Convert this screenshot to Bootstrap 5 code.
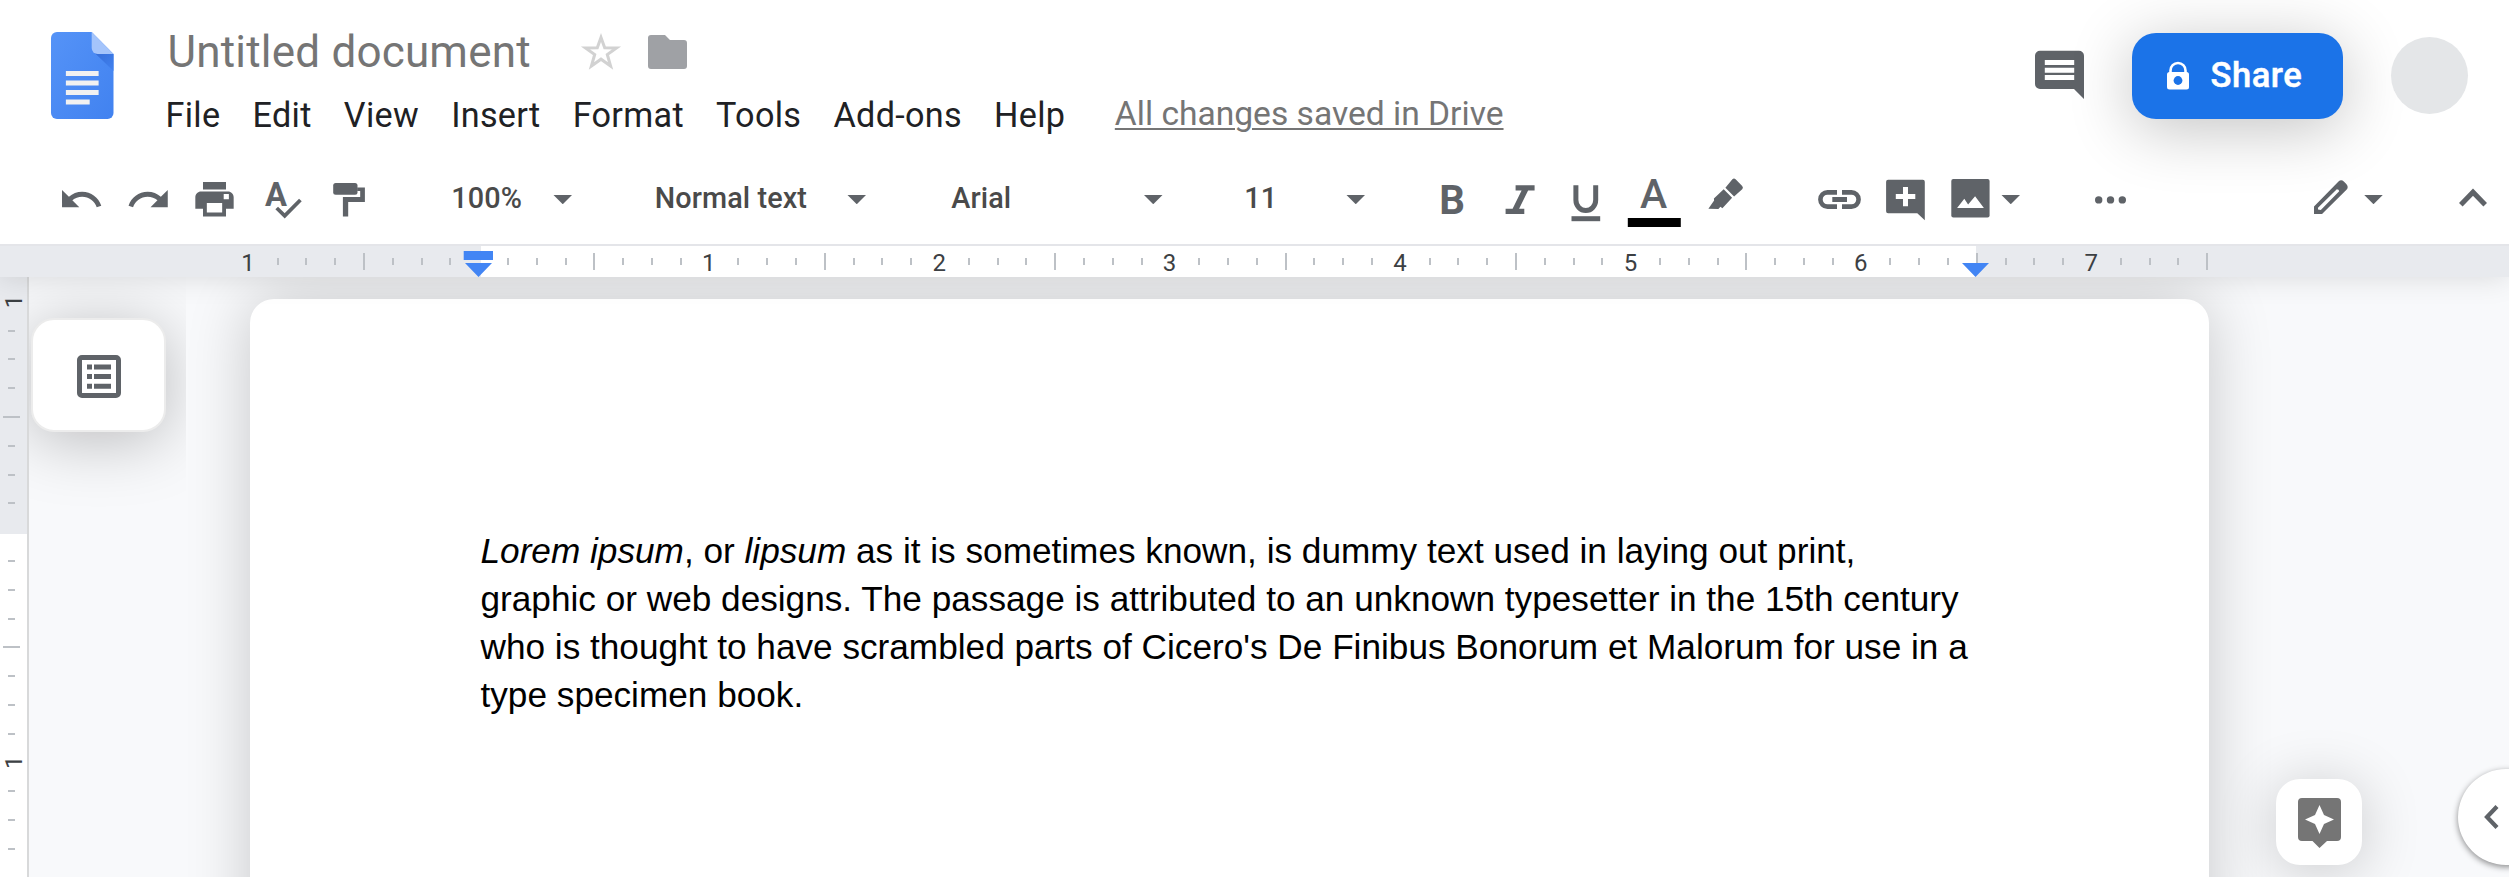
<!DOCTYPE html>
<html lang="en">
<head>
<meta charset="utf-8">
<title>Untitled document</title>
<link href="https://cdn.jsdelivr.net/npm/bootstrap@5.3.0/dist/css/bootstrap.min.css" rel="stylesheet">
<style>
  :root { --ink: #5f6368; }
  body { font-family: Roboto, "Liberation Sans", sans-serif; background: #f8f9fb; color: #202124; height: 877px; }
  svg { display: block; flex: none; overflow: visible; }
  .app-head { height: 277px; z-index: 5; box-shadow: 0 0 28px rgba(0,0,0,.13); }
  .head-row { height: 154px; padding-left: 51px; }
  .logo { margin-top: 32px; }
  .titles { margin-left: 53px; padding-top: 27.5px; }
  .doc-title { font-size: 44px; line-height: 48px; letter-spacing: .2px; color: #757575; }
  .title-line { height: 48px; padding-left: 1px; }
  .star { margin-left: 51.5px; margin-top: -1px; }
  .folder { margin-left: 28px; }
  .menus { margin-top: 17px; font-size: 34.2px; line-height: 44px; letter-spacing: .3px; margin-left: -1px; }
  .menus .m { display: block; color: #202124; text-decoration: none; }
  .menus .m + .m { margin-left: 32.2px; }
  .saved { font-size: 33.6px; letter-spacing: 0; color: #757575; line-height: 42px; text-decoration: underline; text-decoration-thickness: 2px; text-underline-offset: 3px; margin-left: 49.5px; }
  .comments { margin-top: 50px; margin-right: 48px; }
  .share-btn { width: 211px; height: 86px; margin-top: 33px; border-radius: 24px; background: #1b73e8; color: #fff; font-weight: 500; font-size: 34.6px; line-height: 1; letter-spacing: .5px; border: 0; box-shadow: 0 10px 64px rgba(0,0,0,.24); padding: 0 0 0 35px; }
  .share-btn span { margin-left: 21.5px; margin-top: -2px; -webkit-text-stroke: .5px #fff; }
  .avatar { width: 77px; height: 77px; margin: 37px 41px 0 48px; background: #e4e6e8; }
  .tools { height: 90px; color: var(--ink); }
  .tb { width: 67.2px; height: 90px; }
  .tb-r { width: 67.4px; height: 90px; }
  .tb svg, .tb-r svg { width: 100%; height: 90px; }
  .picker { font-weight: 500; font-size: 28.8px; letter-spacing: .1px; color: #4a4a4a; line-height: 40px; }
  .picker span:first-child { margin-top: -2px; }
  .pick-zoom { width: 121px; margin-left: 67.3px; }
  .pick-style { width: 211.5px; margin-left: 82.5px; }
  .pick-font { width: 211.5px; margin-left: 85px; }
  .pick-size { width: 121px; margin-left: 81.5px; }
  .caret-d { width: 19px; height: 9.5px; background: var(--ink); clip-path: polygon(0 0, 100% 0, 50% 100%); margin-top: 1px; }
  .hruler { height: 33px; border-top: 2px solid #e4e5e9; background: #e8eaee; }
  .work { height: 600px; }
  .vruler { width: 29px; border-right: 2px solid #d8d9da; background: #fff; z-index: 2; }
  .side { width: 157px; padding: 41px 0 0 2px; }
  .outline-card { width: 135px; height: 114px; border: 2px solid #ececec; border-radius: 23px; box-shadow: 0 8px 64px rgba(0,0,0,.25); }
  .sheet { width: 1959px; margin: 22px 0 0 64px; border-radius: 24px 24px 0 0; padding: 228px 0 0 230.5px; height: 700px; box-shadow: 0 0 64px rgba(0,0,0,.2); color: #000; font: 35.2px/48px "Liberation Sans", Arial, sans-serif; }
  .explore { width: 86px; height: 86px; right: 147px; top: 502px; border-radius: 24px; box-shadow: 0 6px 60px rgba(0,0,0,.2); }
  .panel-toggle { width: 96px; height: 96px; right: -45px; top: 492px; box-shadow: 0 2px 6px rgba(0,0,0,.45); }
</style>
</head>
<body class="overflow-hidden m-0">
<header class="app-head position-relative bg-white">
  <div class="head-row d-flex align-items-start">
    <svg class="logo" width="62.500" height="87" viewBox="0 0 63 87" preserveAspectRatio="none">
      <defs><linearGradient id="lg" x1="0" y1="0" x2="1" y2="1"><stop offset="0" stop-color="#5593f7"/><stop offset="1" stop-color="#4182f0"/></linearGradient>
      <linearGradient id="fs" x1="0" y1="0" x2="1" y2="1"><stop offset="0" stop-color="#356cd6"/><stop offset="1" stop-color="#4182f0"/></linearGradient></defs>
      <path d="M6 0H41L63 22V81a6 6 0 0 1-6 6H6a6 6 0 0 1-6-6V6a6 6 0 0 1 6-6z" fill="url(#lg)"/>
      <path d="M43 20 63 39V22z" fill="url(#fs)"/>
      <path d="M41 0V16a6 6 0 0 0 6 6H63z" fill="#a4c4fb"/>
      <path d="M15 39H48v5H15zM15 48.500H48v5H15zM15 58H48v5H15zM15 67.500H39v5H15z" fill="#f1f1f1"/>
    </svg>
    <div class="titles">
      <div class="title-line d-flex align-items-center">
        <div class="doc-title">Untitled document</div>
        <svg class="star" width="38" height="37" viewBox="0 0 38 37"><path d="M19 4.500 22.700 14.800 34.500 15 25.300 21.500 28.600 33 19 26.200 9.400 33 12.700 21.500 3.500 15 15.300 14.800z" fill="none" stroke="#d2d2d2" stroke-width="3"/></svg>
        <svg class="folder" width="39" height="34" viewBox="0 0 39 34"><path d="M3 0H17L22 5H36a3 3 0 0 1 3 3V31a3 3 0 0 1-3 3H3a3 3 0 0 1-3-3V3a3 3 0 0 1 3-3z" fill="#9fa1a5"/></svg>
      </div>
      <nav class="menus d-flex">
        <a class="m">File</a><a class="m">Edit</a><a class="m">View</a><a class="m">Insert</a><a class="m">Format</a><a class="m">Tools</a><a class="m">Add-ons</a><a class="m">Help</a>
        <a class="saved">All changes saved in Drive</a>
      </nav>
    </div>
    <svg class="comments ms-auto" width="49" height="50" viewBox="0 0 49 50"><path d="M5 .7H44a5 5 0 0 1 5 5V49L39 39H5a5 5 0 0 1-5-5V5.700a5 5 0 0 1 5-5z" fill="#5f6368"/><path d="M9.800 10H39.200v5H9.800zM9.800 17.800H39.200v5H9.800zM9.800 25H39.200v5H9.800z" fill="#fff"/></svg>
    <button class="share-btn btn d-flex align-items-center">
      <svg width="22" height="28" viewBox="0 0 22 28"><path d="M3.500 11V8.500a7.500 7.500 0 0 1 15 0V11" fill="none" stroke="#fff" stroke-width="2.600"/><rect y="10" width="22" height="17.500" rx="2.500" fill="#fff"/><circle cx="11" cy="18.500" r="4.400" fill="#1b73e8"/></svg>
      <span>Share</span>
    </button>
    <div class="avatar rounded-circle flex-shrink-0"></div>
  </div>

  <div class="tools d-flex align-items-center">
    <div class="d-flex" style="margin-left:48px">
      <div class="tb"><svg viewBox="0 0 67.2 90"><g transform="translate(10.200 22.500) scale(1.917)"><path fill="#5f6368" d="M12.500 8c-2.650 0-5.050.990-6.900 2.600L2 7v9h9l-3.620-3.620c1.390-1.160 3.160-1.880 5.120-1.880 3.540 0 6.550 2.310 7.600 5.500l2.370-.780C21.080 11.030 17.150 8 12.500 8z"/></g></svg></div>
      <div class="tb"><svg viewBox="0 0 67.2 90"><g transform="translate(10.600 22.500) scale(1.917)"><path fill="#5f6368" d="M18.400 10.600C16.550 8.990 14.150 8 11.500 8c-4.650 0-8.580 3.030-9.960 7.220L3.900 16c1.050-3.190 4.050-5.500 7.600-5.500 1.950 0 3.730.720 5.120 1.880L13 16h9V7l-3.600 3.600z"/></g></svg></div>
      <div class="tb"><svg viewBox="0 0 67.2 90"><g transform="translate(9.500 22.200) scale(1.917)"><path fill="#5f6368" d="M19 8H5c-1.660 0-3 1.340-3 3v6h4v4h12v-4h4v-6c0-1.660-1.340-3-3-3zm-3 11H8v-5h8v5zm3.500-7h-2.700v-2.700h2.700zM18 3H6v4h12V3z"/></g></svg></div>
      <div class="tb"><svg viewBox="249.6 154 67.2 90"><text x="275.500" y="206.500" text-anchor="middle" font-size="34" font-weight="700" textLength="22" lengthAdjust="spacingAndGlyphs" fill="#5f6368">A</text><path d="M276.300 208 284.300 215.800 300 200" fill="none" stroke="#fff" stroke-width="7"/><path d="M276.300 208 284.300 215.800 300 200" fill="none" stroke="#5f6368" stroke-width="3.800"/></svg></div>
      <div class="tb"><svg viewBox="316.8 154 67.2 90"><rect x="333" y="183" width="24.300" height="11.800" rx="2.500" fill="#5f6368"/><path d="M357 187.500H364.700V202H348V216.500H342.700V197H360V191H357z" fill="#5f6368"/></svg></div>
    </div>
    <div class="picker pick-zoom d-flex align-items-center justify-content-between"><span>100%</span><span class="caret-d"></span></div>
    <div class="picker pick-style d-flex align-items-center justify-content-between"><span>Normal text</span><span class="caret-d"></span></div>
    <div class="picker pick-font d-flex align-items-center justify-content-between"><span>Arial</span><span class="caret-d"></span></div>
    <div class="picker pick-size d-flex align-items-center justify-content-between"><span>11</span><span class="caret-d"></span></div>
    <div class="d-flex" style="margin-left:53px">
      <div class="tb-r"><svg viewBox="1418 154 67.4 90"><text x="1452" y="214" text-anchor="middle" font-size="40.300" font-weight="700" fill="#5f6368">B</text></svg></div>
      <div class="tb-r"><svg viewBox="1485.4 154 67.4 90"><path d="M1515 185.300H1534V190.600H1527.500L1518.500 208.700H1523.700V214H1505V208.700H1512L1521 190.600H1515z" fill="#5f6368"/></svg></div>
      <div class="tb-r"><svg viewBox="1552.8 154 67.4 90"><path d="M1575.700 185.300V200a9.900 10.500 0 0 0 19.800 0V185.300" fill="none" stroke="#5f6368" stroke-width="5"/><path d="M1571.300 216.200H1600V221.200H1571.300z" fill="#5f6368"/></svg></div>
      <div class="tb-r"><svg viewBox="1620.2 154 67.4 90"><text x="1653.800" y="208.500" text-anchor="middle" font-size="41" font-weight="500" fill="#5f6368">A</text><path d="M1628 218H1681V227H1628z" fill="#000"/></svg></div>
      <div class="tb-r"><svg viewBox="1687.6 154 67.4 90"><path d="M1735.200 179.200 1741.800 186Q1743.300 187.700 1741.800 189.300L1733.700 196.500 1725 187.700 1732 179.200Q1733.600 177.600 1735.200 179.200zM1723.300 189.300 1731.700 197.700 1722 208.300 1720 206.700 1718 209 1708 208.700 1713.700 200.500 1713.500 198.500z" fill="#5f6368"/></svg></div>
    </div>
    <div class="d-flex" style="margin-left:51px">
      <div class="tb"><svg viewBox="1806 154 67.2 90"><path d="M1837 192.400H1827.500a7.100 7.100 0 0 0 0 14.200H1837M1842 192.400H1851.500a7.100 7.100 0 0 1 0 14.200H1842" fill="none" stroke="#5f6368" stroke-width="4.600"/><path d="M1832.300 197H1847V202H1832.300z" fill="#5f6368"/></svg></div>
      <div class="tb"><svg viewBox="1873.2 154 67.2 90"><path d="M1888.300 179.700H1923a2 2 0 0 1 2 2V220.300L1917.500 213.300H1888.300a2 2 0 0 1-2-2V181.700a2 2 0 0 1 2-2z" fill="#5f6368"/><path d="M1905.700 187V206.300M1896 196.500H1915.500" stroke="#fff" stroke-width="5"/></svg></div>
      <div class="tb"><svg viewBox="1940.4 154 67.2 90"><rect x="1950.700" y="179" width="38.300" height="38.500" rx="2" fill="#5f6368"/><path d="M1956.500 208 1963.700 198.700 1967.500 204.500 1974.500 196.300 1983.300 208z" fill="#fff"/></svg></div>
    </div>
    <span class="caret-d" style="margin-left:-6.500px"></span>
    <svg style="margin-left:74.500px" width="31" height="9" viewBox="0 0 31 9"><g fill="#5f6368"><circle cx="3.700" cy="4.900" r="3.700"/><circle cx="15.500" cy="4.900" r="3.700"/><circle cx="27.300" cy="4.900" r="3.700"/></g></svg>
    <svg class="ms-auto" style="margin-right:16.500px;margin-top:-4px" width="34" height="34" viewBox="0 0 34 34"><path fill-rule="evenodd" fill="#5f6368" d="M0 26.500 24.500 1.500Q27.200-.8 29.800 1.500L32.300 4Q35 7 32.500 9.800L8 34H0zM4 27.800V29.600L6.800 30 25.200 11.200Q25 9.400 22.800 9.300z"/></svg>
    <span class="caret-d"></span>
    <svg style="margin-left:76px;margin-right:22px;margin-top:-3px" width="28" height="18" viewBox="0 0 28 18"><path d="M1.800 15.800 14 3.200 26.200 15.800" fill="none" stroke="#5f6368" stroke-width="5"/></svg>
  </div>
  <div class="hruler"><svg id="hr" width="2509" height="31" viewBox="0 246 2509 31"></svg></div>
</header>

<main class="work d-flex position-relative overflow-hidden">
  <div class="vruler flex-shrink-0"><svg id="vr" width="27" height="600" viewBox="0 277 27 600"></svg></div>
  <aside class="side flex-shrink-0 overflow-hidden">
    <div class="outline-card bg-white d-flex align-items-center justify-content-center">
      <svg style="margin:3px 0 0 1px" width="44" height="43" viewBox="0 0 44 43"><rect x="2.500" y="2.500" width="39" height="38" rx="2.500" fill="none" stroke="#5f6368" stroke-width="5"/><path d="M10 9.500H15v5H10zM17 9.500H34v5H17zM10 19H15v5H10zM17 19H34v5H17zM10 28.800H15v5H10zM17 28.800H34v5H17z" fill="#5f6368"/></svg>
    </div>
  </aside>
  <article class="sheet bg-white flex-shrink-0 text-nowrap"><i>Lorem ipsum</i>, or <i>lipsum</i> as it is sometimes known, is dummy text used in laying out print,<br>graphic or web designs. The passage is attributed to an unknown typesetter in the 15th century<br>who is thought to have scrambled parts of Cicero's De Finibus Bonorum et Malorum for use in a<br>type specimen book.</article>
  <div class="explore position-absolute bg-white d-flex justify-content-center">
    <svg style="margin-top:19px" width="43" height="50" viewBox="0 0 43 50"><path d="M4 0H39a4 4 0 0 1 4 4V39a4 4 0 0 1-4 4H29L21.500 50 14.500 43H4a4 4 0 0 1-4-4V4a4 4 0 0 1 4-4z" fill="#757575"/><path d="M21.500 7 26 17 36 21.500 26 26 21.500 36 17 26 7 21.500 17 17z" fill="#fff"/></svg>
  </div>
  <div class="panel-toggle position-absolute bg-white rounded-circle d-flex align-items-center">
    <svg style="margin-left:26px" width="15" height="24" viewBox="0 0 15 24"><path d="M13 1.500 3 12 13 22.500" fill="none" stroke="#5f6368" stroke-width="4.200"/></svg>
  </div>
</main>
<script src="https://cdn.jsdelivr.net/npm/bootstrap@5.3.0/dist/js/bootstrap.bundle.min.js"></script>
<script>
  // Rulers: one inch is 230.4px, with eighth ticks and taller half-inch ticks.
  const EIGHTH = 28.8, X0 = 479.2, Y0 = 532.2;
  let h = '<rect x="481" y="246" width="1495" height="31" fill="#fff"/>';
  for (let i = -8; i <= 60; i++) {
    const x = X0 + i * EIGHTH;
    if (i === 0) continue;
    if (i % 8 === 0) h += `<text x="${x - .8}" y="271" text-anchor="middle" font-size="24" fill="#3c4043">${Math.abs(i / 8)}</text>`;
    else {
      const major = i % 4 === 0;
      h += `<rect x="${Math.round(x - 1)}" y="${major ? 253 : 258}" width="2" height="${major ? 17 : 7}" fill="#bdc1c6"/>`;
    }
  }
  h += '<path d="M463.700 251H493V260H463.700zM465 263H492L478.500 277zM1962 263H1989L1975.500 277z" fill="#4285f4"/>';
  document.getElementById('hr').innerHTML = h;

  let v = '<rect x="0" y="277" width="27" height="257" fill="#e8eaee"/>';
  for (let i = -8; i <= 11; i++) {
    const y = Y0 + i * EIGHTH;
    if (i === 0) continue;
    if (i % 8 === 0) v += `<text transform="translate(22 ${y - .3}) rotate(-90)" text-anchor="middle" font-size="24" fill="#3c4043">${Math.abs(i / 8)}</text>`;
    else {
      const major = i % 4 === 0;
      v += `<rect x="${major ? 3 : 8}" y="${Math.round(y - 1)}" width="${major ? 17 : 7}" height="2" fill="#bdc1c6"/>`;
    }
  }
  document.getElementById('vr').innerHTML = v;
</script>
</body>
</html>
